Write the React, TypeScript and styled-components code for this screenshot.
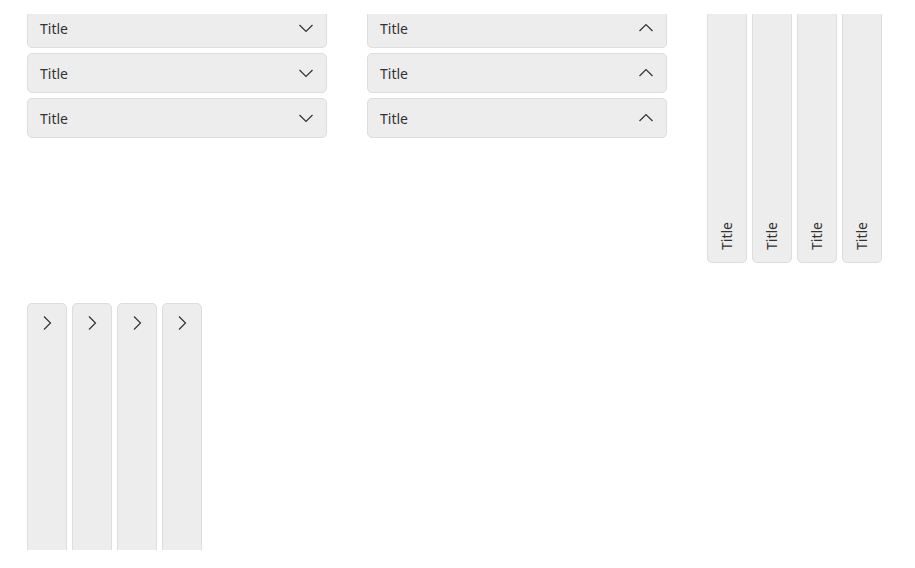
import React from "react";
import styled, { createGlobalStyle } from "styled-components";

const Global = createGlobalStyle`
  html, body { margin: 0; padding: 0; background: #ffffff; }
  body { font-family: "Noto Sans", "Open Sans", sans-serif; color: #333333; }
`;

const Viewport = styled.div`
  margin-top: 14px;
  height: 536px;
  overflow: hidden;
`;

const Content = styled.div`
  margin-top: -6px;
  padding-left: 27px;
  display: grid;
  grid-template-columns: 300px 300px auto;
  column-gap: 40px;
  row-gap: 40px;
  align-items: start;
`;

const Stack = styled.div`
  display: flex;
  flex-direction: column;
  gap: 5px;
`;

const Header = styled.div`
  box-sizing: border-box;
  height: 40px;
  padding: 0 12px;
  display: flex;
  align-items: center;
  justify-content: space-between;
  background: #ededed;
  border: 1px solid #dddddd;
  border-radius: 5px;
  font-size: 14px;
  color: #333333;
`;

const PanelRow = styled.div`
  display: flex;
  gap: 5px;
`;

const VerticalPanel = styled.div<{ $align: "top" | "bottom" }>`
  box-sizing: border-box;
  width: 40px;
  height: 255px;
  display: flex;
  flex-direction: column;
  align-items: center;
  justify-content: ${(p) => (p.$align === "bottom" ? "flex-end" : "flex-start")};
  padding: ${(p) => (p.$align === "bottom" ? "0 0 12px" : "11px 0 0")};
  background: #ededed;
  border: 1px solid #dddddd;
  border-radius: 5px;
`;

const VerticalLabel = styled.span`
  writing-mode: vertical-rl;
  transform: rotate(180deg);
  font-size: 14px;
  line-height: 16px;
  color: #333333;
`;

const Icon = styled.svg<{ $dir: "down" | "up" | "right" }>`
  width: 16px;
  height: 16px;
  flex: none;
  transform: ${(p) =>
    p.$dir === "up" ? "rotate(180deg)" : p.$dir === "right" ? "rotate(-90deg)" : "none"};
`;

const Chevron = ({ dir }: { dir: "down" | "up" | "right" }) => (
  <Icon $dir={dir} viewBox="0 0 16 16" fill="none">
    <path d="M1.5 5 L8 11.5 L14.5 5" stroke="#333333" strokeWidth="1.2" />
  </Icon>
);

const titles = ["Title", "Title", "Title"];
const four = [0, 1, 2, 3];

export default function App() {
  return (
    <>
      <Global />
      <Viewport>
        <Content>
          <Stack>
            {titles.map((t, i) => (
              <Header key={i}>
                <span>{t}</span>
                <Chevron dir="down" />
              </Header>
            ))}
          </Stack>
          <Stack>
            {titles.map((t, i) => (
              <Header key={i}>
                <span>{t}</span>
                <Chevron dir="up" />
              </Header>
            ))}
          </Stack>
          <PanelRow>
            {four.map((i) => (
              <VerticalPanel key={i} $align="bottom">
                <VerticalLabel>Title</VerticalLabel>
              </VerticalPanel>
            ))}
          </PanelRow>
          <PanelRow>
            {four.map((i) => (
              <VerticalPanel key={i} $align="top">
                <Chevron dir="right" />
              </VerticalPanel>
            ))}
          </PanelRow>
        </Content>
      </Viewport>
    </>
  );
}
